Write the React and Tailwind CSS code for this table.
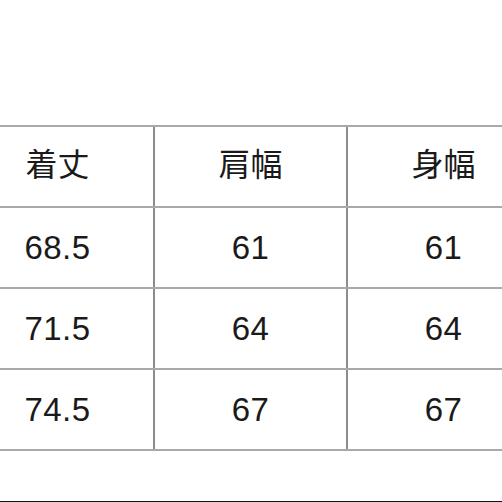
import React from 'react';

const rows = [
  ['着丈', '肩幅', '身幅'],
  ['68.5', '61', '61'],
  ['71.5', '64', '64'],
  ['74.5', '67', '67'],
];

const App = () => {
  return (
    <div
      className="flex flex-col h-[502px] w-[502px] overflow-hidden bg-white text-[#1a1a1a]"
      style={{ fontFamily: '"Liberation Sans", "Noto Sans CJK JP", sans-serif' }}
    >
      <div className="pt-[125px]">
        <div className="ml-[-38px] w-[579px] border-t-2 border-[#a9a9a9]">
          {rows.map((row, i) => (
            <div key={i} className="grid grid-cols-[193px_193px_193px] h-[81px] border-b-2 border-[#a9a9a9]">
              {row.map((cell, j) => (
                <div
                  key={j}
                  className={`flex items-center justify-center border-r-2 border-[#8c8c8c] ${
                    i === 0 ? 'text-[32px] pb-1' : 'text-[33px] tracking-[0.5px]'
                  }`}
                >
                  {cell}
                </div>
              ))}
            </div>
          ))}
        </div>
      </div>
      <div className="mt-auto h-px bg-[#111]"></div>
    </div>
  );
};

export default App;
